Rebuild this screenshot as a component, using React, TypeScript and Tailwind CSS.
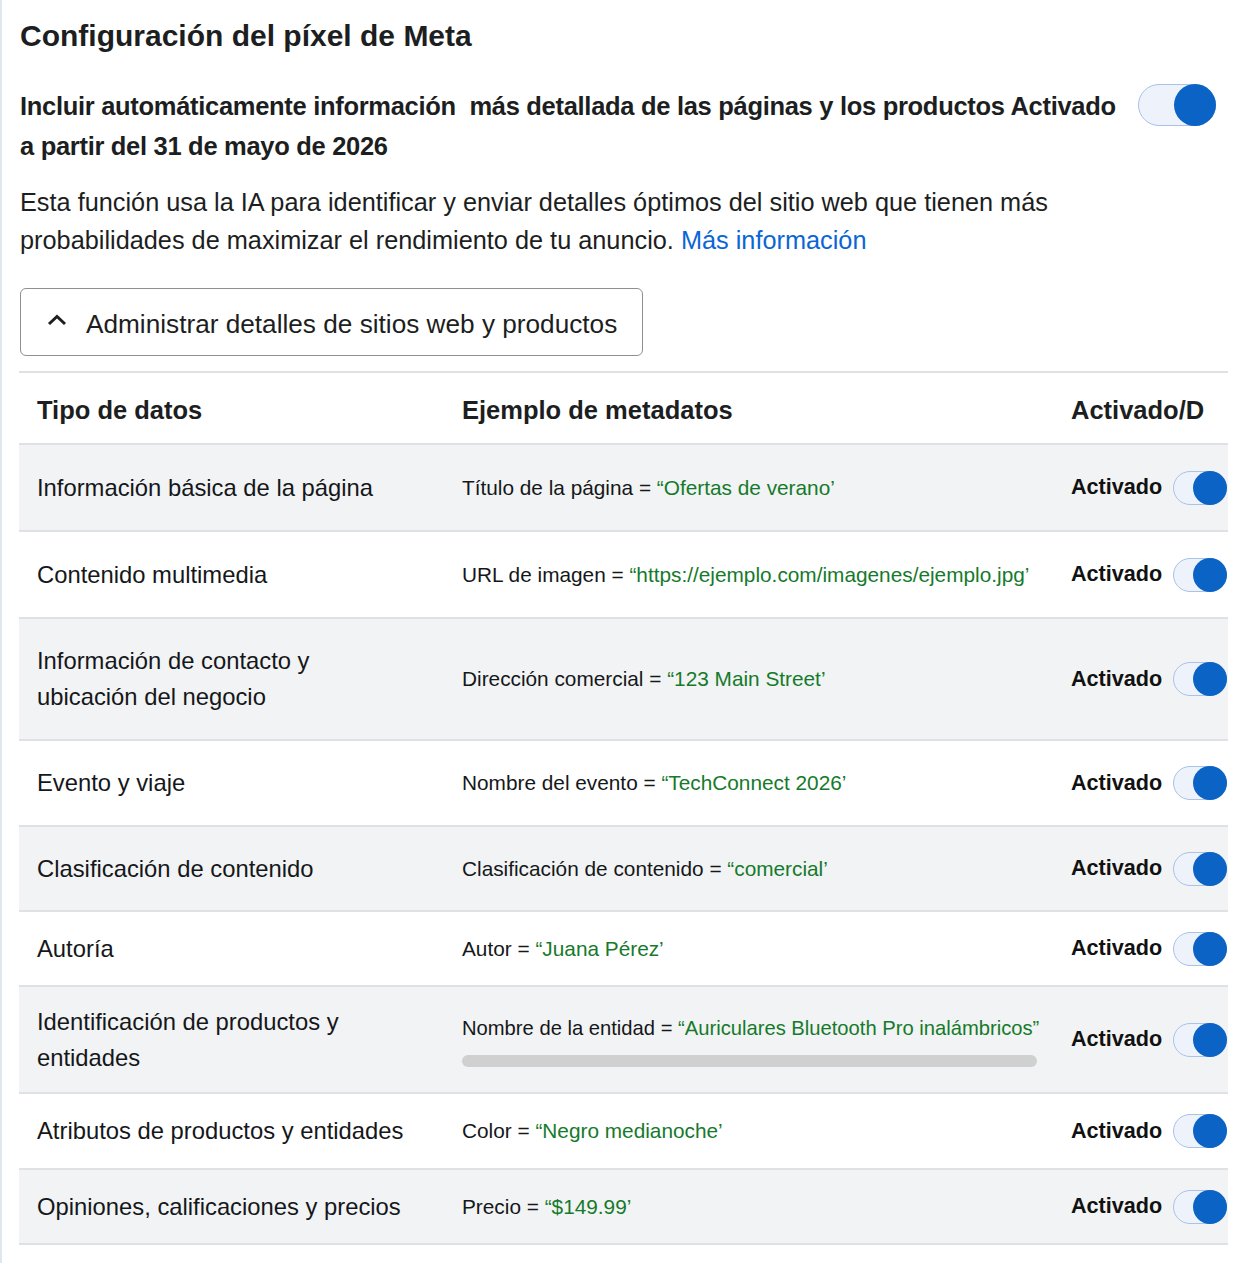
import { useState } from "react";

type Row = {
	label: string[];
	field: string;
	value: string;
	h: string;
	shade: boolean;
	bar?: boolean;
};

const rows: Row[] = [
	{ label: ["Información básica de la página"], field: "Título de la página", value: "“Ofertas de verano’", h: "h-[87px]", shade: true },
	{ label: ["Contenido multimedia"], field: "URL de imagen", value: "“https://ejemplo.com/imagenes/ejemplo.jpg’", h: "h-[87px]", shade: false },
	{ label: ["Información de contacto y", "ubicación del negocio"], field: "Dirección comercial", value: "“123 Main Street’", h: "h-[122px]", shade: true },
	{ label: ["Evento y viaje"], field: "Nombre del evento", value: "“TechConnect 2026’", h: "h-[86px]", shade: false },
	{ label: ["Clasificación de contenido"], field: "Clasificación de contenido", value: "“comercial’", h: "h-[85px]", shade: true },
	{ label: ["Autoría"], field: "Autor", value: "“Juana Pérez’", h: "h-[75px]", shade: false },
	{ label: ["Identificación de productos y", "entidades"], field: "Nombre de la entidad", value: "“Auriculares Bluetooth Pro inalámbricos”", h: "h-[107px]", shade: true, bar: true },
	{ label: ["Atributos de productos y entidades"], field: "Color", value: "“Negro medianoche’", h: "h-[76px]", shade: false },
	{ label: ["Opiniones, calificaciones y precios"], field: "Precio", value: "“$149.99’", h: "h-[75px]", shade: true },
];

const Toggle = ({ big }: { big?: boolean }) => {
	const [on, setOn] = useState(true);
	return (
		<button
			onClick={() => setOn((p) => !p)}
			className={`flex shrink-0 rounded-full border border-[#a8c2e8] bg-[#eef3fb] ${on ? "justify-end" : "justify-start"} ${big ? "h-[42px] w-[78px]" : "h-[34px] w-[54px]"}`}
		>
			<span className={`-m-px rounded-full bg-[#0b63c5] ${big ? "size-[42px]" : "size-[34px]"}`} />
		</button>
	);
};

export default function App() {
	return (
		<div className="min-h-screen border-l-2 border-[#e2e6ed] bg-white pl-[18px] font-['Liberation_Sans',sans-serif] text-[#1c1e21]">
			<h1 className="pt-[18px] text-[30px] font-bold leading-[36px]">Configuración del píxel de Meta</h1>

			<div className="mt-[32px] flex items-start pr-[29px]">
				<p className="whitespace-nowrap text-[25.5px] font-bold leading-[40px] tracking-[-0.3px]">
					Incluir automáticamente información{"\u00a0 "}más detallada de las páginas y los productos Activado
					<br />a partir del 31 de mayo de 2026
				</p>
				<div className="-mt-[2px] ml-auto">
					<Toggle big />
				</div>
			</div>

			<p className="mt-[17px] text-[25.3px] leading-[38px]">
				Esta función usa la IA para identificar y enviar detalles óptimos del sitio web que tienen más
				<br />
				probabilidades de maximizar el rendimiento de tu anuncio.{" "}
				<a href="#" className="text-[#0a66d6]">Más información</a>
			</p>

			<button className="mt-[29px] flex h-[68px] w-[623px] items-center gap-[19px] rounded-md border border-[#8d9095] pl-[26px] pt-[5px] text-[26.2px]">
				<svg width="20" height="12" viewBox="0 0 20 12" className="-mt-[10px]">
					<polyline points="2,10 10,2.5 18,10" fill="none" stroke="#1c1e21" strokeWidth="3" />
				</svg>
				Administrar detalles de sitios web y productos
			</button>

			<div className="-ml-px mt-[15px] w-[1209px] overflow-hidden border-t-2 border-[#e0e1e4]">
				<div className="grid h-[72px] grid-cols-[425px_609px_1fr] items-center border-b-2 border-[#e0e1e4] pt-[5px] text-[25.5px] font-bold">
					<div className="pl-[18px]">Tipo de datos</div>
					<div className="pl-[18px]">Ejemplo de metadatos</div>
					<div className="whitespace-nowrap pl-[18px]">Activado/D</div>
				</div>
				{rows.map((r) => (
					<div
						key={r.field}
						className={`grid grid-cols-[425px_609px_1fr] items-center border-b-2 border-[#e0e1e4] ${r.h} ${r.shade ? "bg-[#f2f3f4]" : "bg-white"}`}
					>
						<div className="pl-[18px] text-[23.8px] leading-[36px] text-[#15171a]">
							{r.label.map((l) => (
								<div key={l}>{l}</div>
							))}
						</div>
						<div className={`pl-[18px] leading-[30px] text-[#15171a] ${r.bar ? "text-[20.2px]" : "text-[20.8px]"}`}>
							<div className="whitespace-nowrap">
								{r.field} = <span className="text-[#157a2b]">{r.value}</span>
							</div>
							{r.bar && <div className="mt-[12px] h-[12px] w-[575px] rounded-full bg-[#d0d0d0]" />}
						</div>
						<div className="flex items-center gap-[11px] pl-[18px]">
							<span className="text-[21.6px] font-bold text-[#111]">Activado</span>
							<Toggle />
						</div>
					</div>
				))}
			</div>
		</div>
	);
}
